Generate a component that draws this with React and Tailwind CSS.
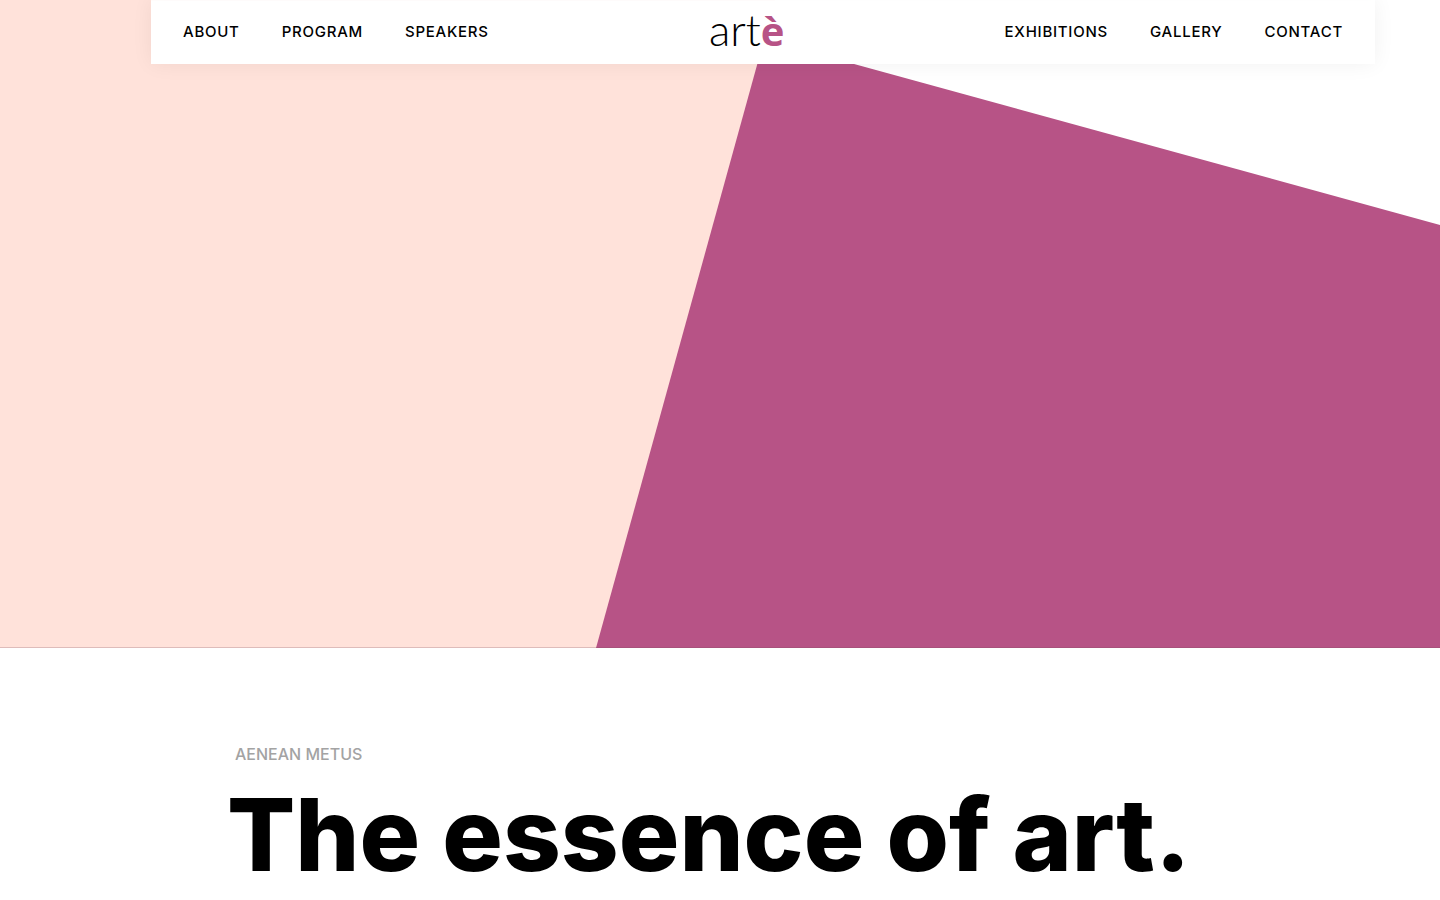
const leftLinks = ['About', 'Program', 'Speakers'];
const rightLinks = ['Exhibitions', 'Gallery', 'Contact'];

function NavLinks({ label, links }) {
  return (
    <nav aria-label={label} className="flex gap-[42px]">
      {links.map(link => (
        <a
          key={link}
          href={`#${link.toLowerCase()}`}
          className="text-[15px] leading-5 font-medium uppercase tracking-wider text-black hover:text-[#b75386]"
        >
          {link}
        </a>
      ))}
    </nav>
  );
}

export default function App() {
  return (
    <div className="min-h-screen bg-white font-['Inter',sans-serif]">

      {/* Header */}
      <header className="absolute inset-x-0 top-0 z-10 pl-[151px] pr-[65px]">
        <div className="flex h-16 items-center justify-between border-t border-white/90 bg-white bg-clip-padding px-8 pb-[2px] shadow-[0_0_20px_rgba(0,0,0,0.06)]">
          <NavLinks label="Main" links={leftLinks} />
          <a href="#home" className="pb-[6px] font-['Lato',sans-serif] text-[44px] leading-none font-light text-black">
            art<span className="font-['Open_Sans',sans-serif] text-[40px] font-bold text-[#b75386]">è</span>
          </a>
          <NavLinks label="More" links={rightLinks} />
        </div>
      </header>

      {/* Hero */}
      <section className="h-[72vh] overflow-hidden">
        <svg viewBox="0 0 1440 648" preserveAspectRatio="xMidYMid slice" aria-hidden="true" className="h-full w-full">
          <rect width="1440" height="648" fill="#fff" />
          <polygon points="763,39 1440,225 1440,648 580,648" fill="#b75386" />
          <polygon points="0,0 775,0 596,648 0,648" fill="#ffe2da" />
          <rect y="647" width="1440" height="1" fill="#7a4a5a" opacity="0.25" />
        </svg>
      </section>

      {/* Intro */}
      <main className="px-[227px] pt-24">
        <p className="ml-2 text-base leading-5 font-medium text-[#a3a3a3]">AENEAN METUS</p>
        <h1 className="mt-5 text-[101px] leading-[100px] font-extrabold whitespace-nowrap text-black">
          The essence of art.
        </h1>
      </main>
    </div>
  );
}
